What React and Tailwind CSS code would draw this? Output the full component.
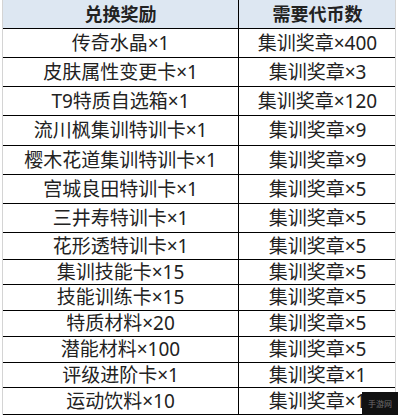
const rows = [
  ["传奇水晶×1", "集训奖章×400", "h-[29px]"],
  ["皮肤属性变更卡×1", "集训奖章×3", "h-[29px]"],
  ["T9特质自选箱×1", "集训奖章×120", "h-[29px]"],
  ["流川枫集训特训卡×1", "集训奖章×9", "h-[30px]"],
  ["樱木花道集训特训卡×1", "集训奖章×9", "h-[29px]"],
  ["宫城良田特训卡×1", "集训奖章×5", "h-[29px]"],
  ["三井寿特训卡×1", "集训奖章×5", "h-[29px]"],
  ["花形透特训卡×1", "集训奖章×5", "h-[27px]"],
  ["集训技能卡×15", "集训奖章×5", "h-[25px]"],
  ["技能训练卡×15", "集训奖章×5", "h-[26px]"],
  ["特质材料×20", "集训奖章×5", "h-[26px]"],
  ["潜能材料×100", "集训奖章×5", "h-[26px]"],
  ["评级进阶卡×1", "集训奖章×1", "h-[25px]"],
  ["运动饮料×10", "集训奖章×1", "h-[27px]"],
];

export default function App() {
  return (
    <div
      className="relative w-[400px] h-[415px] overflow-hidden bg-white text-[#222]"
      style={{ fontFamily: '"Noto Sans", "Noto Sans CJK SC", sans-serif' }}
    >
      <div className="ml-[2px] w-[394px] border-l border-r border-[#d4d4d4]">
        {/* header */}
        <div className="grid grid-cols-[236px_157px] h-[29px] bg-[#dde7f2] border-b border-black">
          <div className="flex items-center justify-center border-r border-black text-[18px] font-bold leading-none">
            兑换奖励
          </div>
          <div className="flex items-center justify-center text-[18px] font-bold leading-none">
            需要代币数
          </div>
        </div>

        {rows.map(([item, cost, h]) => (
          <div key={item} className={`grid grid-cols-[236px_157px] border-b border-black ${h}`}>
            <div className="flex items-center justify-center border-r border-black text-[19px] leading-none whitespace-nowrap">
              {item}
            </div>
            <div className="flex items-center justify-center text-[19px] leading-none whitespace-nowrap">
              {cost}
            </div>
          </div>
        ))}
      </div>

      {/* watermark */}
      <div className="absolute left-[362px] top-[392px] w-[36px] h-[23px] bg-[#111] flex items-center justify-center">
        <span className="text-[8px] text-white/40 leading-none">手游网</span>
      </div>
    </div>
  );
}
